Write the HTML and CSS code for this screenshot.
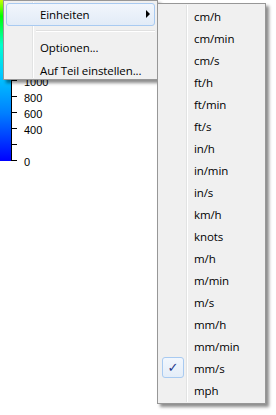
FILE: index.html
```html
<!DOCTYPE html>
<html lang="de">
<head>
    <meta charset="UTF-8">
    <title>Einheiten</title>
    <link rel="stylesheet" href="styles.css">
</head>
<body>

    <div class="legende">
        <div class="farbbalken"></div>
        <div class="achse">
            <div class="strich"><span>1000</span></div>
            <div class="strich"><span>800</span></div>
            <div class="strich"><span>600</span></div>
            <div class="strich"><span>400</span></div>
            <div class="strich"><span></span></div>
            <div class="strich"><span>0</span></div>
        </div>
    </div>

    <!-- Kontextmenü -->
    <div class="menu hauptmenu">
        <div class="eintrag aktiv">Einheiten<span class="pfeil"></span></div>
        <div class="trenner"></div>
        <div class="eintrag">Optionen...</div>
        <div class="eintrag">Auf Teil einstellen...</div>
    </div>

    <!-- Untermenü Einheiten -->
    <div class="menu untermenu">
        <div class="eintrag">cm/h</div>
        <div class="eintrag">cm/min</div>
        <div class="eintrag">cm/s</div>
        <div class="eintrag">ft/h</div>
        <div class="eintrag">ft/min</div>
        <div class="eintrag">ft/s</div>
        <div class="eintrag">in/h</div>
        <div class="eintrag">in/min</div>
        <div class="eintrag">in/s</div>
        <div class="eintrag">km/h</div>
        <div class="eintrag">knots</div>
        <div class="eintrag">m/h</div>
        <div class="eintrag">m/min</div>
        <div class="eintrag">m/s</div>
        <div class="eintrag">mm/h</div>
        <div class="eintrag">mm/min</div>
        <div class="eintrag gewaehlt"><span class="haken">&#10003;</span>mm/s</div>
        <div class="eintrag">mph</div>
    </div>

</body>
</html>
```

FILE: styles.css
```css
* {
    margin: 0;
    padding: 0;
    box-sizing: border-box;
}

body {
    background-color: #fff;
    font-family: "Open Sans", "Noto Sans", sans-serif;
    font-size: 11.5px;
    letter-spacing: -0.1px;
    color: #000;
    width: 276px;
    height: 415px;
    overflow: hidden;
    position: relative;
}

/* Farblegende links */
.legende {
    display: flex;
    height: 162px;
}

.farbbalken {
    width: 11px;
    height: 161px;
    background: linear-gradient(to bottom, #c8ff00 0%, #00ff00 10%, #00ffcc 28%, #00ccff 45%, #0080ff 70%, #0000ff 100%);
}

.achse {
    border-left: 1px solid #000;
    height: 161px;
    display: flex;
    flex-direction: column;
    justify-content: flex-end;
}

.strich {
    height: 16px;
    position: relative;
    font-family: "Liberation Sans", sans-serif;
    font-size: 11px;
    letter-spacing: 0;
}

.strich::before {
    content: "";
    position: absolute;
    left: 0;
    bottom: 0;
    width: 5px;
    border-top: 1px solid #000;
}

.strich span {
    position: absolute;
    left: 12px;
    bottom: -7px;
    line-height: 12px;
}

/* Menüs */
.menu {
    position: absolute;
    background-color: #f0f0f0;
    border: 1px solid #979797;
    box-shadow: 3px 3px 3px rgba(0, 0, 0, 0.45);
    padding: 2px;
}

.menu::before {
    content: "";
    position: absolute;
    top: 1px;
    bottom: 1px;
    left: 28px;
    width: 1px;
    background-color: #e2e3e3;
    border-right: 1px solid #fff;
    box-sizing: content-box;
}

.hauptmenu {
    left: 3px;
    top: 0;
    width: 155px;
    height: 80px;
}

.untermenu {
    left: 157px;
    top: 3px;
    width: 109px;
    height: 401px;
}

.eintrag {
    position: relative;
    height: 22px;
    line-height: 20px;
    padding-left: 33px;
    border: 1px solid transparent;
    border-radius: 3px;
}

.hauptmenu .eintrag {
    height: 23px;
    line-height: 21px;
}

.aktiv {
    background: linear-gradient(to bottom, #f1f6fc, #e2ebf7);
    border-color: #a8caf1;
}

.pfeil {
    position: absolute;
    right: 4px;
    top: 6px;
    border-left: 4px solid #000;
    border-top: 4px solid transparent;
    border-bottom: 4px solid transparent;
}

.trenner {
    margin: 4px 0 4px 30px;
    border-top: 1px solid #e0e0e0;
    border-bottom: 1px solid #fff;
}

.haken {
    position: absolute;
    left: 1px;
    top: -2px;
    width: 22px;
    height: 21px;
    line-height: 19px;
    text-align: center;
    color: #1e3a8c;
    font-family: "DejaVu Sans", sans-serif;
    font-size: 13px;
    font-weight: bold;
    background: linear-gradient(to bottom, #f2f7fd, #e4edf8);
    border: 1px solid #a8caf1;
    border-radius: 3px;
}
```
